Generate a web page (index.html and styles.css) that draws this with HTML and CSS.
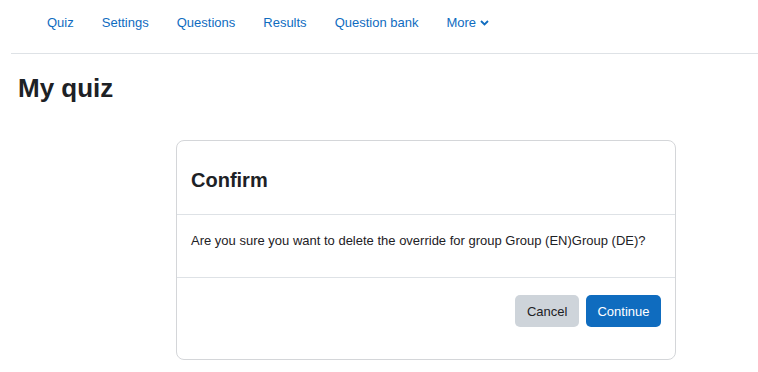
FILE: index.html
```html
<!DOCTYPE html>
<html lang="en">
<head>
  <meta charset="UTF-8">
  <title>My quiz</title>
  <link rel="stylesheet" href="styles.css">
</head>
<body>
  <nav class="secondary-nav">
    <ul class="nav-list">
      <li><a href="#">Quiz</a></li>
      <li><a href="#">Settings</a></li>
      <li><a href="#">Questions</a></li>
      <li><a href="#">Results</a></li>
      <li><a href="#">Question bank</a></li>
      <li>
        <a href="#" class="more">More
          <svg width="9" height="6" viewBox="0 0 9 6"><path d="M1 1l3.5 3.5L8 1" fill="none" stroke="currentColor" stroke-width="1.8"/></svg>
        </a>
      </li>
    </ul>
  </nav>

  <h1 class="page-title">My quiz</h1>

  <div class="confirm-wrap">
    <div class="card">
      <div class="card-header">
        <h2>Confirm</h2>
      </div>
      <div class="card-body">
        <p>Are you sure you want to delete the override for group Group (EN)Group (DE)?</p>
      </div>
      <div class="card-footer">
        <button class="btn btn-secondary">Cancel</button>
        <button class="btn btn-primary">Continue</button>
      </div>
    </div>
  </div>
</body>
</html>
```

FILE: styles.css
```css
* {
  box-sizing: border-box;
  margin: 0;
  padding: 0;
}

body {
  font-family: "Liberation Sans", Arial, sans-serif;
  font-size: 13px;
  color: #1d2125;
  background: #fff;
}

.secondary-nav {
  margin-left: 11px;
  border-bottom: 1px solid #dee2e6;
}

.nav-list {
  list-style: none;
  display: flex;
  padding-left: 22px;
  height: 53px;
  align-items: flex-start;
}

.nav-list a {
  display: flex;
  align-items: center;
  gap: 4px;
  padding: 15px 14px 0;
  color: #0f6cbf;
  text-decoration: none;
  line-height: 15px;
}

.page-title {
  font-size: 26px;
  font-weight: bold;
  margin: 18px 0 0 18px;
  line-height: 32px;
}

.confirm-wrap {
  display: flex;
  justify-content: center;
  padding: 36px 0 0 94px;
}

.card {
  width: 500px;
  border: 1px solid #d4d6d9;
  border-radius: 8px;
}

.card-header {
  padding: 26px 14px 0;
  height: 74px;
  border-bottom: 1px solid #dee2e6;
}

.card-header h2 {
  font-size: 20px;
  font-weight: bold;
  line-height: 26px;
}

.card-body {
  height: 63px;
  padding: 18px 14px 0;
  border-bottom: 1px solid #dee2e6;
}

.card-body p {
  line-height: 16px;
}

.card-footer {
  display: flex;
  justify-content: flex-end;
  gap: 7px;
  padding: 17px 14px 32px;
}

.btn {
  font-family: inherit;
  font-size: 13px;
  border: none;
  border-radius: 5px;
  height: 32px;
  padding: 0 11.5px;
  cursor: pointer;
}

.btn-secondary {
  background: #ced4da;
  color: #1d2125;
}

.btn-primary {
  background: #0f6cbf;
  color: #fff;
}
```
